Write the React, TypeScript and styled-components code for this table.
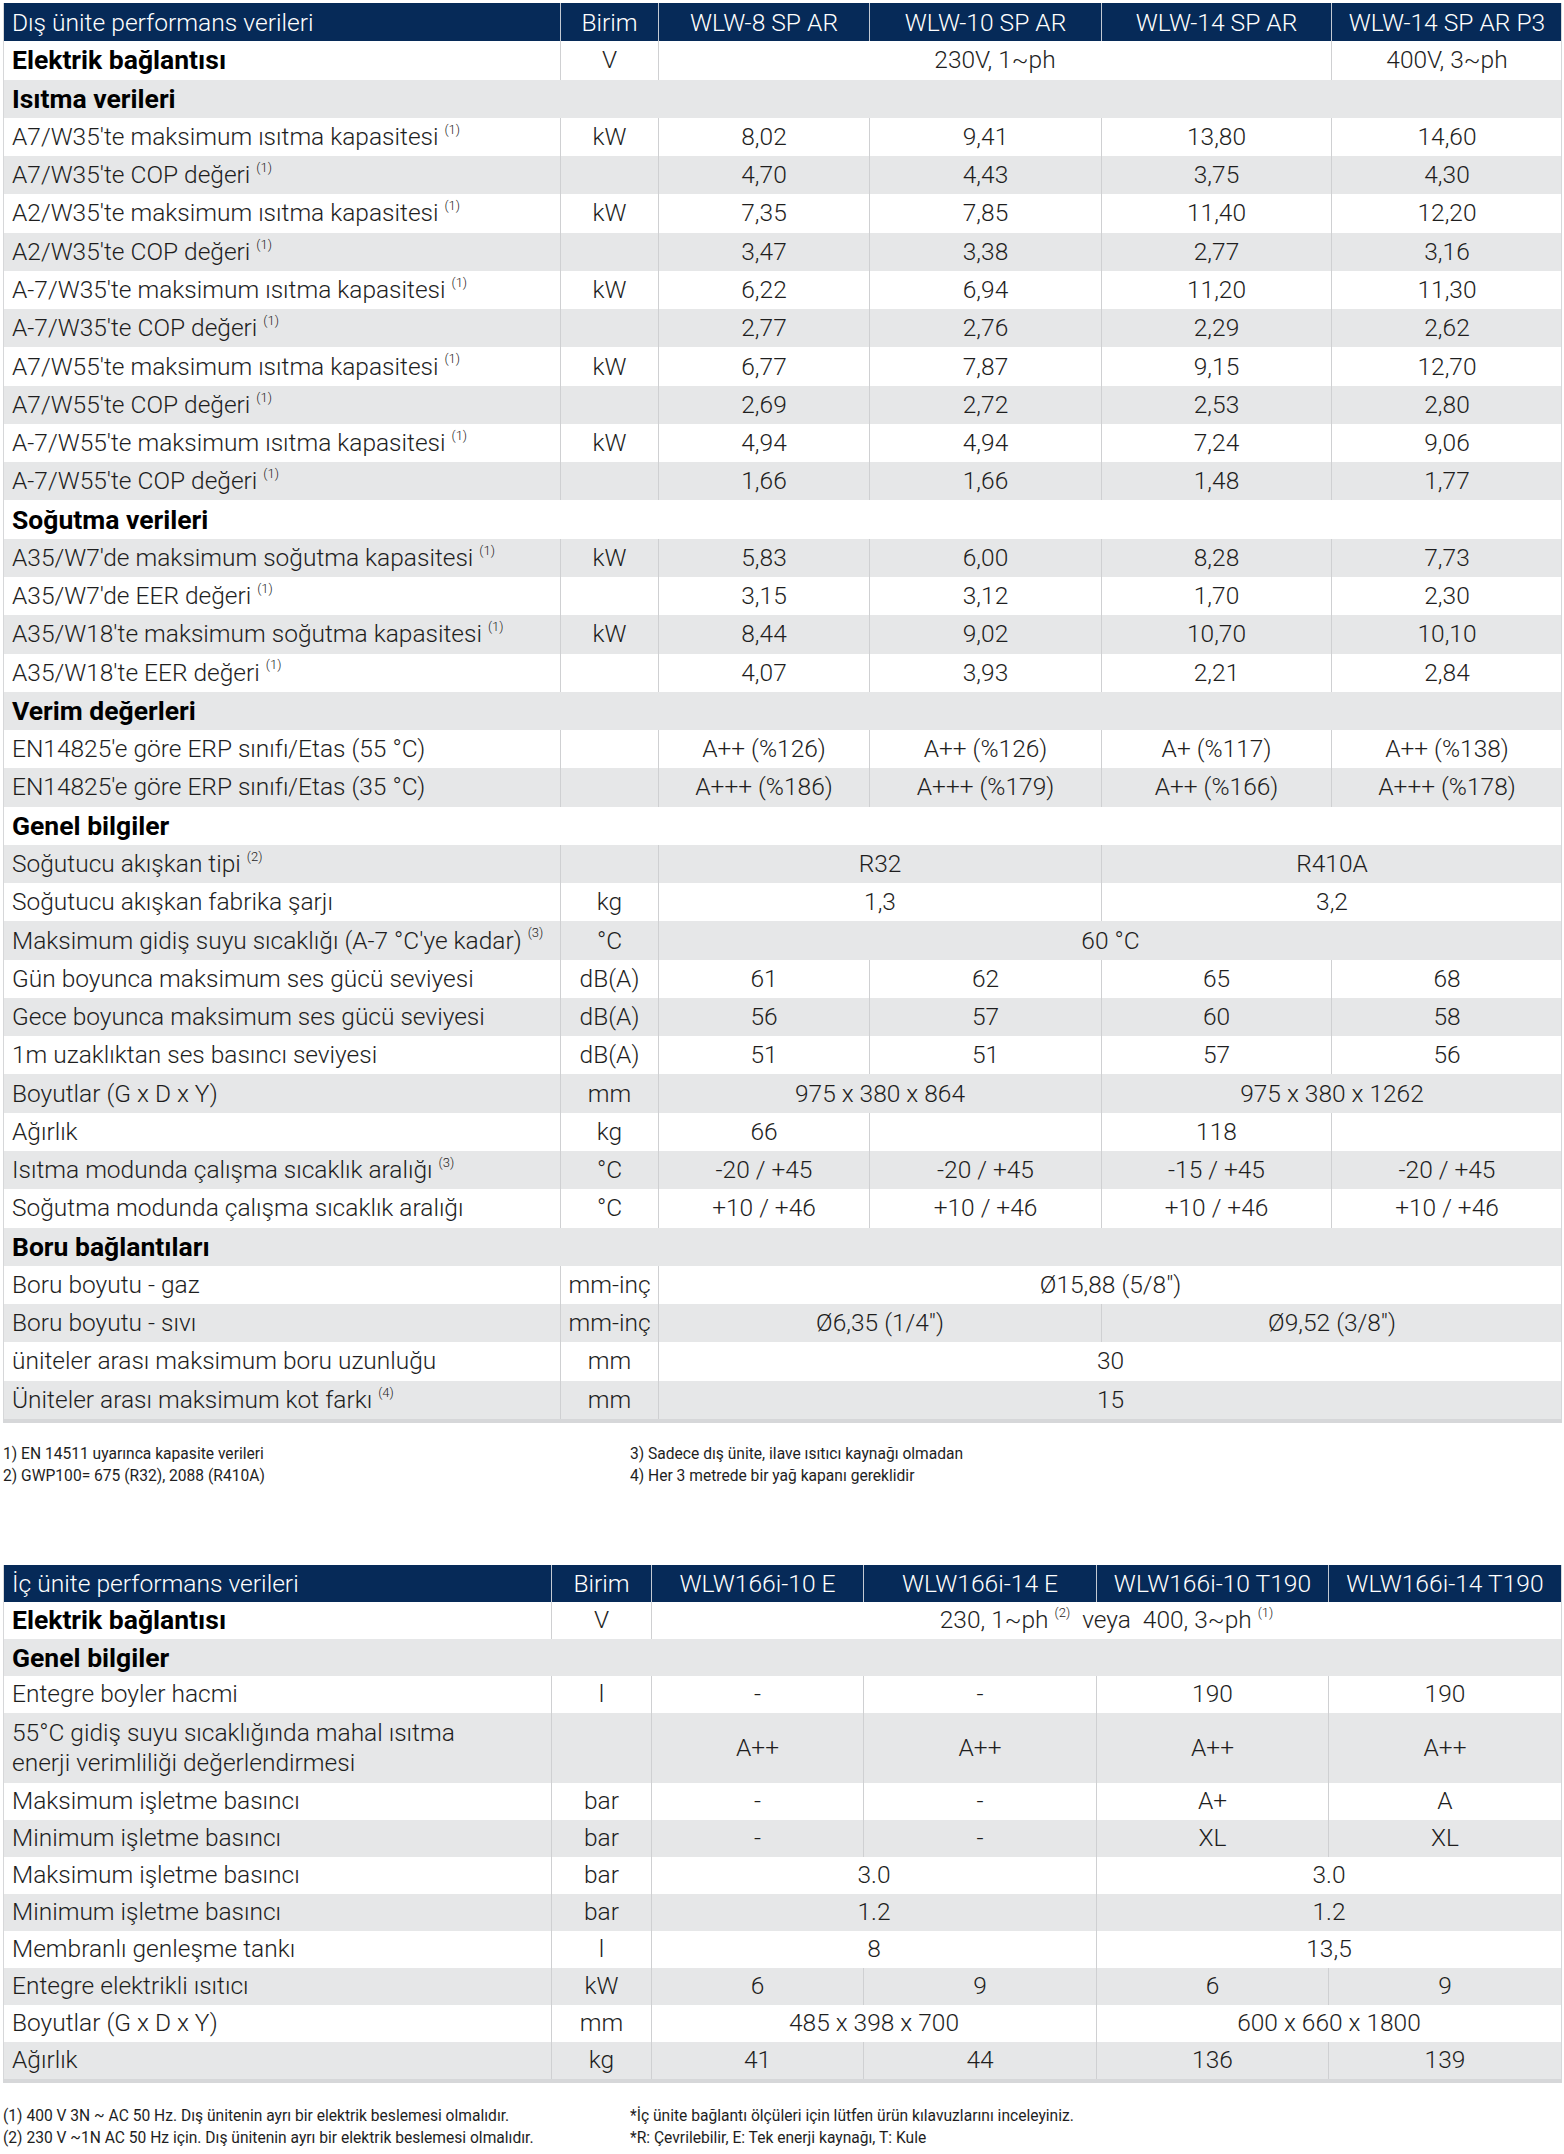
import React from 'react';
import styled, { createGlobalStyle } from 'styled-components';

const GlobalStyle = createGlobalStyle`
  html, body { margin: 0; padding: 0; background: #ffffff; }
  body { font-family: Roboto, "Liberation Sans", Arial, sans-serif; color: #1e1e1e; }
`;

const Page = styled.div`
  width: 1564px;
  box-sizing: border-box;
  padding: 3px 2px 0 3px;
  display: flex;
  flex-direction: column;
`;

const Table = styled.div`
  display: flex;
  flex-direction: column;
  border-left: 1px solid #d6d7d9;
  border-right: 1px solid #d6d7d9;
  border-bottom: 4px solid #d6d7d9;
`;

const Row = styled.div<{ $cols: string; $h: number; $shade?: boolean }>`
  display: grid;
  grid-template-columns: ${(p) => p.$cols};
  height: ${(p) => p.$h}px;
  background: ${(p) => (p.$shade ? '#e6e7e8' : '#ffffff')};
`;

const HeadRow = styled(Row)`
  background: #062a58;
`;

const HeadCell = styled.div<{ $left?: boolean }>`
  display: flex;
  align-items: center;
  justify-content: ${(p) => (p.$left ? 'flex-start' : 'center')};
  padding-left: ${(p) => (p.$left ? '8px' : '0')};
  color: #ffffff;
  font-size: 24.6px;
  font-weight: 300;
  white-space: nowrap;
  & + & { border-left: 1px solid #c3c9d2; }
`;

const Cell = styled.div<{ $span?: number; $left?: boolean; $bold?: boolean }>`
  grid-column: span ${(p) => p.$span ?? 1};
  display: flex;
  align-items: center;
  justify-content: ${(p) => (p.$left ? 'flex-start' : 'center')};
  padding-left: ${(p) => (p.$left ? '8px' : '0')};
  font-size: ${(p) => (p.$bold ? '26.5px' : '24.5px')};
  line-height: 30px;
  font-weight: ${(p) => (p.$bold ? 700 : 300)};
  color: ${(p) => (p.$bold ? '#000000' : '#1e1e1e')};
  white-space: pre-line;
  & + & { border-left: 1px solid #cfd0d2; }
`;

const CellText = styled.span`
  display: block;
`;

const SectionCell = styled.div`
  grid-column: 1 / -1;
  display: flex;
  align-items: center;
  padding-left: 8px;
  font-size: 26.5px;
  font-weight: 700;
  color: #000000;
`;

const Sup = styled.sup`
  font-size: 13px;
  font-weight: 300;
  line-height: 0;
  position: relative;
  top: -2px;
`;

const Notes = styled.div<{ $top: number }>`
  display: grid;
  grid-template-columns: 627px 1fr;
  margin-top: ${(p) => p.$top}px;
  font-size: 15.6px;
  line-height: 22px;
  font-weight: 400;
  color: #1e1e1e;
`;

const NoteCol = styled.div`
  display: flex;
  flex-direction: column;
`;

const Spacer = styled.div<{ $h: number }>`
  height: ${(p) => p.$h}px;
`;

type Val = string | [React.ReactNode, number];
type RowDef =
  | { section: string }
  | { label: React.ReactNode; unit: string; cells: Val[]; bold?: boolean; tall?: boolean };

const S = (n: number) => <Sup>({n})</Sup>;

const d = (label: React.ReactNode, unit: string, ...cells: Val[]): RowDef => ({ label, unit, cells });

const rows1: RowDef[] = [
  { label: 'Elektrik bağlantısı', unit: 'V', cells: [['230V, 1~ph', 3], '400V, 3~ph'], bold: true },
  { section: 'Isıtma verileri' },
  d(<>A7/W35'te maksimum ısıtma kapasitesi {S(1)}</>, 'kW', '8,02', '9,41', '13,80', '14,60'),
  d(<>A7/W35'te COP değeri {S(1)}</>, '', '4,70', '4,43', '3,75', '4,30'),
  d(<>A2/W35'te maksimum ısıtma kapasitesi {S(1)}</>, 'kW', '7,35', '7,85', '11,40', '12,20'),
  d(<>A2/W35'te COP değeri {S(1)}</>, '', '3,47', '3,38', '2,77', '3,16'),
  d(<>A-7/W35'te maksimum ısıtma kapasitesi {S(1)}</>, 'kW', '6,22', '6,94', '11,20', '11,30'),
  d(<>A-7/W35'te COP değeri {S(1)}</>, '', '2,77', '2,76', '2,29', '2,62'),
  d(<>A7/W55'te maksimum ısıtma kapasitesi {S(1)}</>, 'kW', '6,77', '7,87', '9,15', '12,70'),
  d(<>A7/W55'te COP değeri {S(1)}</>, '', '2,69', '2,72', '2,53', '2,80'),
  d(<>A-7/W55'te maksimum ısıtma kapasitesi {S(1)}</>, 'kW', '4,94', '4,94', '7,24', '9,06'),
  d(<>A-7/W55'te COP değeri {S(1)}</>, '', '1,66', '1,66', '1,48', '1,77'),
  { section: 'Soğutma verileri' },
  d(<>A35/W7'de maksimum soğutma kapasitesi {S(1)}</>, 'kW', '5,83', '6,00', '8,28', '7,73'),
  d(<>A35/W7'de EER değeri {S(1)}</>, '', '3,15', '3,12', '1,70', '2,30'),
  d(<>A35/W18'te maksimum soğutma kapasitesi {S(1)}</>, 'kW', '8,44', '9,02', '10,70', '10,10'),
  d(<>A35/W18'te EER değeri {S(1)}</>, '', '4,07', '3,93', '2,21', '2,84'),
  { section: 'Verim değerleri' },
  d("EN14825'e göre ERP sınıfı/Etas (55 °C)", '', 'A++ (%126)', 'A++ (%126)', 'A+ (%117)', 'A++ (%138)'),
  d("EN14825'e göre ERP sınıfı/Etas (35 °C)", '', 'A+++ (%186)', 'A+++ (%179)', 'A++ (%166)', 'A+++ (%178)'),
  { section: 'Genel bilgiler' },
  d(<>Soğutucu akışkan tipi {S(2)}</>, '', ['R32', 2], ['R410A', 2]),
  d('Soğutucu akışkan fabrika şarjı', 'kg', ['1,3', 2], ['3,2', 2]),
  d(<>Maksimum gidiş suyu sıcaklığı (A-7 °C'ye kadar) {S(3)}</>, '°C', ['60 °C', 4]),
  d('Gün boyunca maksimum ses gücü seviyesi', 'dB(A)', '61', '62', '65', '68'),
  d('Gece boyunca maksimum ses gücü seviyesi', 'dB(A)', '56', '57', '60', '58'),
  d('1m uzaklıktan ses basıncı seviyesi', 'dB(A)', '51', '51', '57', '56'),
  d('Boyutlar (G x D x Y)', 'mm', ['975 x 380 x 864', 2], ['975 x 380 x 1262', 2]),
  d('Ağırlık', 'kg', '66', '', '118', ''),
  d(<>Isıtma modunda çalışma sıcaklık aralığı {S(3)}</>, '°C', '-20 / +45', '-20 / +45', '-15 / +45', '-20 / +45'),
  d('Soğutma modunda çalışma sıcaklık aralığı', '°C', '+10 / +46', '+10 / +46', '+10 / +46', '+10 / +46'),
  { section: 'Boru bağlantıları' },
  d('Boru boyutu - gaz', 'mm-inç', ['Ø15,88 (5/8")', 4]),
  d('Boru boyutu - sıvı', 'mm-inç', ['Ø6,35 (1/4")', 2], ['Ø9,52 (3/8")', 2]),
  d('üniteler arası maksimum boru uzunluğu', 'mm', ['30', 4]),
  d(<>Üniteler arası maksimum kot farkı {S(4)}</>, 'mm', ['15', 4]),
];

const rows2: RowDef[] = [
  {
    label: 'Elektrik bağlantısı',
    unit: 'V',
    cells: [[<>230, 1~ph {S(2)}&nbsp;&nbsp;veya&nbsp;&nbsp;400, 3~ph {S(1)}</>, 4]],
    bold: true,
  },
  { section: 'Genel bilgiler' },
  d('Entegre boyler hacmi', 'l', '-', '-', '190', '190'),
  { label: '55°C gidiş suyu sıcaklığında mahal ısıtma\nenerji verimliliği değerlendirmesi', unit: '', cells: ['A++', 'A++', 'A++', 'A++'], tall: true },
  d('Maksimum işletme basıncı', 'bar', '-', '-', 'A+', 'A'),
  d('Minimum işletme basıncı', 'bar', '-', '-', 'XL', 'XL'),
  d('Maksimum işletme basıncı', 'bar', ['3.0', 2], ['3.0', 2]),
  d('Minimum işletme basıncı', 'bar', ['1.2', 2], ['1.2', 2]),
  d('Membranlı genleşme tankı', 'l', ['8', 2], ['13,5', 2]),
  d('Entegre elektrikli ısıtıcı', 'kW', '6', '9', '6', '9'),
  d('Boyutlar (G x D x Y)', 'mm', ['485 x 398 x 700', 2], ['600 x 660 x 1800', 2]),
  d('Ağırlık', 'kg', '41', '44', '136', '139'),
];

interface SpecTableProps {
  cols: string;
  rowH: number;
  tallH?: number;
  title: string;
  models: string[];
  rows: RowDef[];
}

const SpecTable: React.FC<SpecTableProps> = ({ cols, rowH, tallH, title, models, rows }) => (
  <Table>
    <HeadRow $cols={cols} $h={rowH}>
      <HeadCell $left>{title}</HeadCell>
      <HeadCell>Birim</HeadCell>
      {models.map((m) => (
        <HeadCell key={m}>{m}</HeadCell>
      ))}
    </HeadRow>
    {rows.map((r, i) => {
      const shade = i % 2 === 1;
      if ('section' in r) {
        return (
          <Row key={i} $cols={cols} $h={rowH} $shade={shade}>
            <SectionCell>{r.section}</SectionCell>
          </Row>
        );
      }
      return (
        <Row key={i} $cols={cols} $h={r.tall && tallH ? tallH : rowH} $shade={shade}>
          <Cell $left $bold={r.bold}>
            <CellText>{r.label}</CellText>
          </Cell>
          <Cell>{r.unit}</Cell>
          {r.cells.map((c, j) =>
            Array.isArray(c) ? (
              <Cell key={j} $span={c[1]}>
                <CellText>{c[0]}</CellText>
              </Cell>
            ) : (
              <Cell key={j}>{c}</Cell>
            )
          )}
        </Row>
      );
    })}
  </Table>
);

export default function App() {
  return (
    <Page>
      <GlobalStyle />
      <SpecTable
        cols="556px 98px 211px 232px 230px 231px"
        rowH={38.27}
        title="Dış ünite performans verileri"
        models={['WLW-8 SP AR', 'WLW-10 SP AR', 'WLW-14 SP AR', 'WLW-14 SP AR P3']}
        rows={rows1}
      />
      <Notes $top={20}>
        <NoteCol>
          <span>1) EN 14511 uyarınca kapasite verileri</span>
          <span>2) GWP100= 675 (R32), 2088 (R410A)</span>
        </NoteCol>
        <NoteCol>
          <span>3) Sadece dış ünite, ilave ısıtıcı kaynağı olmadan</span>
          <span>4) Her 3 metrede bir yağ kapanı gereklidir</span>
        </NoteCol>
      </Notes>
      <Spacer $h={78} />
      <SpecTable
        cols="547px 100px 212px 233px 232px 233px"
        rowH={37}
        tallH={70}
        title="İç ünite performans verileri"
        models={['WLW166i-10 E', 'WLW166i-14 E', 'WLW166i-10 T190', 'WLW166i-14 T190']}
        rows={rows2}
      />
      <Notes $top={22}>
        <NoteCol>
          <span>(1) 400 V 3N ~ AC 50 Hz. Dış ünitenin ayrı bir elektrik beslemesi olmalıdır.</span>
          <span>(2) 230 V ~1N AC 50 Hz için. Dış ünitenin ayrı bir elektrik beslemesi olmalıdır.</span>
        </NoteCol>
        <NoteCol>
          <span>*İç ünite bağlantı ölçüleri için lütfen ürün kılavuzlarını inceleyiniz.</span>
          <span>*R: Çevrilebilir, E: Tek enerji kaynağı, T: Kule</span>
        </NoteCol>
      </Notes>
    </Page>
  );
}
